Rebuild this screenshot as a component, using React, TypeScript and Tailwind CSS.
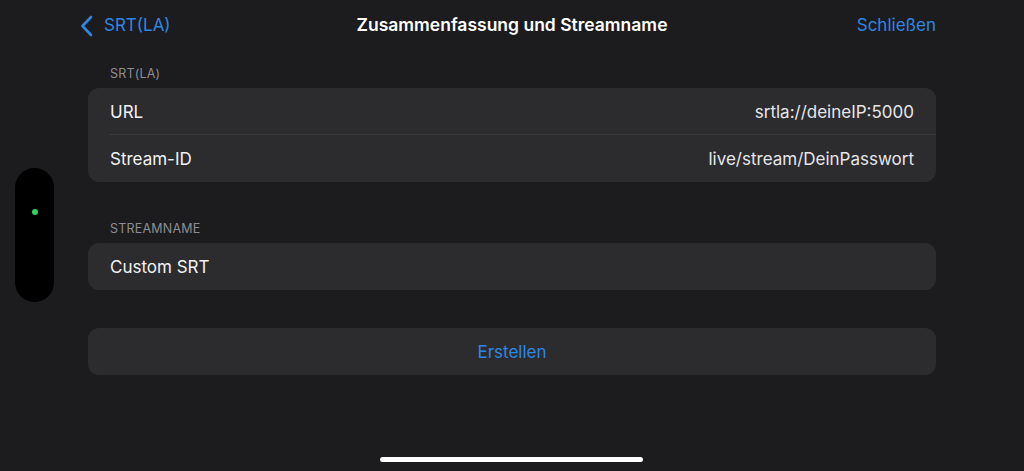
import { ReactNode } from "react";

const blue = "text-[#2f86e3]";

const SectionLabel = ({ children }: { children: ReactNode }) => (
  <div className="pl-[22px] h-[16px] mb-[7px] pt-[1px] text-[12.5px] leading-[16px] tracking-[0.2px] text-[#8d8d93] uppercase">
    {children}
  </div>
);

const Row = ({ label, value, last }: { label: string; value?: string; last?: boolean }) => (
  <div className="relative h-[47px] flex items-center justify-between px-[22px] pt-[3px] text-[17px]">
    <span className="text-[#f2f2f4]">{label}</span>
    {value && <span className="text-[#e6e6ea]">{value}</span>}
    {!last && <div className="absolute bottom-0 left-[21px] right-0 h-px bg-[#3a3a3d]" />}
  </div>
);

export default function App() {
  return (
    <div
      className="relative w-[1024px] h-[471px] overflow-hidden bg-[#1c1c1e]"
      style={{ fontFamily: "Inter, 'Noto Sans', sans-serif" }}
    >
      {/* side island */}
      <div className="absolute left-[15px] top-[168px] w-[39px] h-[134px] rounded-full bg-black">
        <div className="absolute left-[17px] top-[41px] w-[6px] h-[6px] rounded-full bg-[#32d15a]" />
      </div>

      <div className="flex flex-col pl-[88px] pr-[88px]">
        {/* header */}
        <div className="relative h-[48px] pt-[3px] flex items-center justify-between -ml-[8px]">
          <div className={`flex items-center gap-[10px] ${blue} text-[17px]`}>
            <svg width="14" height="22" viewBox="0 0 14 22" fill="none">
              <path d="M11 2 L2.5 11 L11 20" stroke="#2f86e3" strokeWidth="2.6" strokeLinecap="round" strokeLinejoin="round" />
            </svg>
            <span>SRT(LA)</span>
          </div>
          <div className="absolute left-1/2 -translate-x-1/2 ml-[4px] text-[17.5px] font-semibold text-white whitespace-nowrap">
            Zusammenfassung und Streamname
          </div>
          <span className={`${blue} text-[17px]`}>Schließen</span>
        </div>

        <div className="mt-[17px]">
          <SectionLabel>SRT(LA)</SectionLabel>
          <div className="rounded-[11px] bg-[#2c2c2e] overflow-hidden">
            <Row label="URL" value="srtla://deineIP:5000" />
            <Row label="Stream-ID" value="live/stream/DeinPasswort" last />
          </div>
        </div>

        <div className="mt-[38px]">
          <SectionLabel>Streamname</SectionLabel>
          <div className="rounded-[11px] bg-[#2c2c2e] overflow-hidden">
            <Row label="Custom SRT" last />
          </div>
        </div>

        <button className={`mt-[38px] h-[47px] pt-[2px] rounded-[11px] bg-[#2c2c2e] flex items-center justify-center text-[17px] ${blue}`}>
          Erstellen
        </button>
      </div>

      {/* home indicator */}
      <div className="absolute left-[380px] top-[457px] w-[263px] h-[5px] rounded-full bg-white" />
    </div>
  );
}
